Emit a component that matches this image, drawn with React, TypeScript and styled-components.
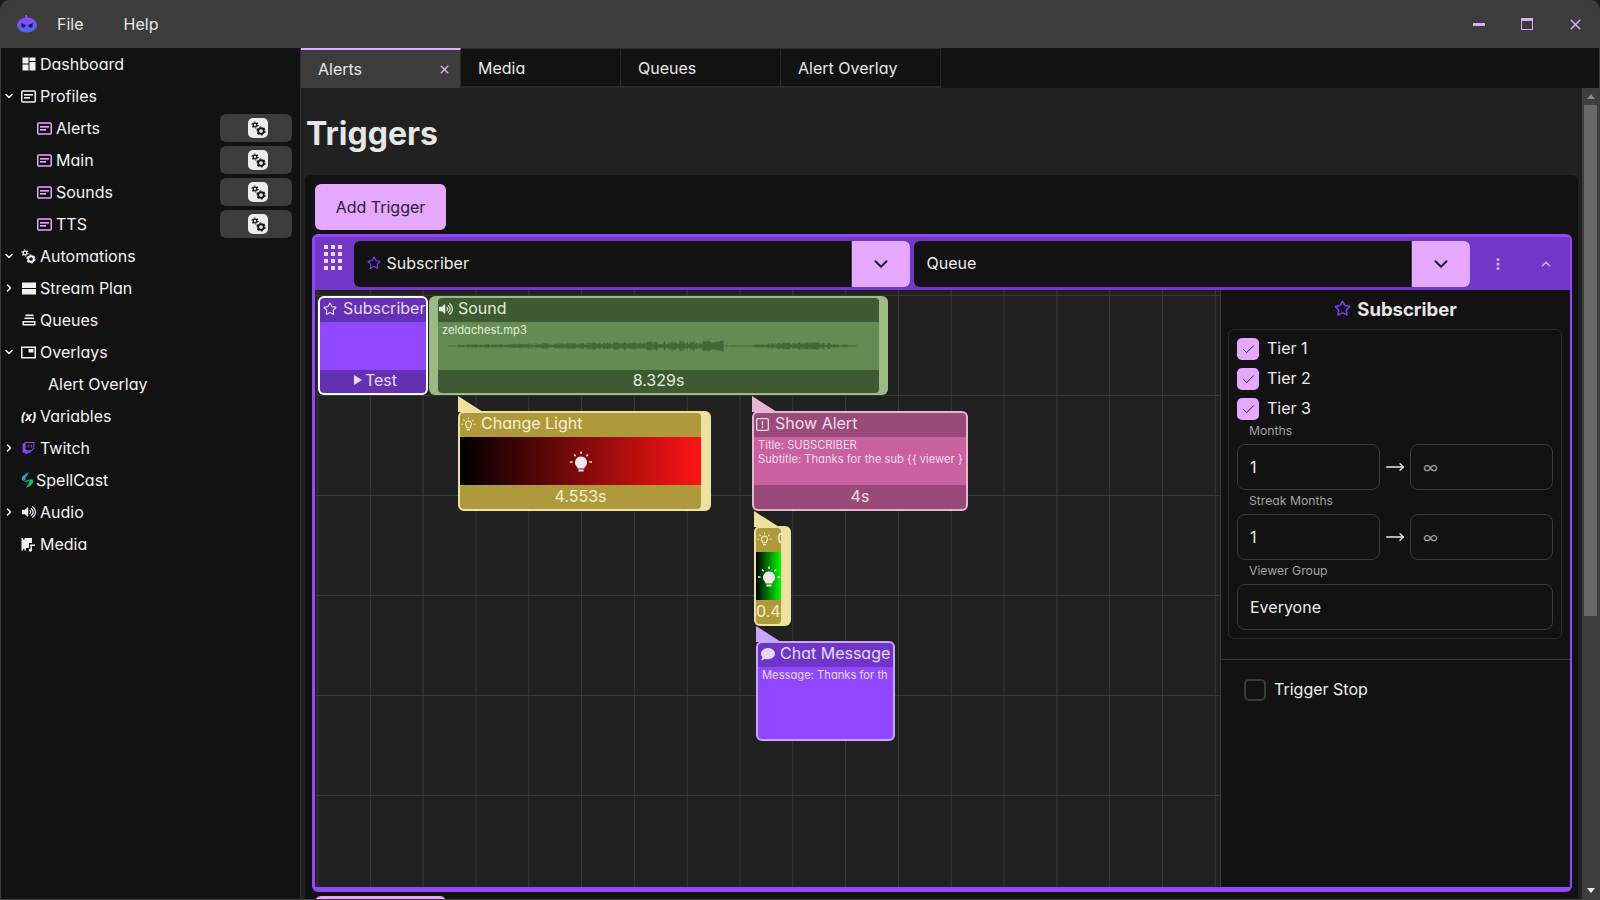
import { useMemo } from "react";
import styled, { createGlobalStyle } from "styled-components";
import { Check, ChevronDown, ChevronRight, ChevronUp, MoveRight, Star, X } from "lucide-react";
import { FaComment, FaTwitch, FaVolumeUp } from "react-icons/fa";

const GlobalStyle = createGlobalStyle`
  html, body {
    margin: 0;
    height: 100%;
    background: #1a1a1a;
    overflow: hidden;
  }
  * {
    box-sizing: border-box;
  }
  body {
    font-family: Inter, "Liberation Sans", sans-serif;
    font-feature-settings: "cv11";
    color: #efeff1;
  }
`;

/* --- icons --- */

function Logo() {
  return (
    <svg width="20" height="18" viewBox="0 0 20 18">
      <defs>
        <linearGradient id="logoFill" x1="0" y1="0" x2="0" y2="1">
          <stop offset="0" stopColor="#9147ff" />
          <stop offset="1" stopColor="#3f6ff0" />
        </linearGradient>
      </defs>
      <rect x="8.5" y="0" width="1.5" height="5" fill="#a463ff" />
      <ellipse cx="10" cy="10" rx="10" ry="7.6" fill="url(#logoFill)" />
      <path d="M4 8 L9 10 L7 13 L4.5 12 Z M16 8 L11 10 L13 13 L15.5 12 Z" fill="#2a1b4d" />
    </svg>
  );
}

function DashboardIcon() {
  return (
    <svg width="14" height="14" viewBox="0 0 14 14" fill="currentColor">
      <rect x="0.5" y="0.5" width="6" height="6" />
      <rect x="0.5" y="7.5" width="6" height="6" />
      <rect x="7.5" y="0.5" width="6" height="3.5" />
      <rect x="7.5" y="5" width="6" height="8.5" />
    </svg>
  );
}

function ProfileIcon({ tone = "currentColor", bar = "currentColor" }: { tone?: string; bar?: string }) {
  return (
    <svg width="15" height="13" viewBox="0 0 15 13" fill="none">
      <rect x="0.75" y="1" width="13.5" height="11" rx="1" stroke={tone} strokeWidth="1.5" />
      <rect x="3" y="4" width="9" height="1.6" fill={bar} />
      <rect x="3" y="7" width="6" height="1.6" fill={bar} />
    </svg>
  );
}

function Gear({ cx, cy, r }: { cx: number; cy: number; r: number }) {
  const dash = (2 * Math.PI * (r + 0.6)) / 12;
  return (
    <g fill="none" stroke="currentColor">
      <circle cx={cx} cy={cy} r={r - 0.6} strokeWidth={r * 0.55} />
      <circle cx={cx} cy={cy} r={r + 0.6} strokeWidth="1.2" strokeDasharray={`${dash} ${dash}`} />
    </g>
  );
}

function GearsIcon() {
  return (
    <svg width="15" height="15" viewBox="0 0 15 15">
      <Gear cx={4} cy={4} r={2.4} />
      <Gear cx={10} cy={10} r={3.4} />
    </svg>
  );
}

function PlanIcon() {
  return (
    <svg width="14" height="13" viewBox="0 0 14 13" fill="currentColor">
      <rect x="0" y="0.5" width="14" height="5.5" />
      <rect x="0" y="7" width="14" height="5.5" />
    </svg>
  );
}

function QueueIcon() {
  return (
    <svg width="14" height="12" viewBox="0 0 14 12" fill="currentColor">
      <rect x="3.5" y="0.5" width="8" height="1.6" />
      <rect x="2.5" y="3.5" width="9.5" height="1.6" />
      <path d="M0.5 7 H13.5 V11.5 H0.5 Z M2 8.5 V10 H12 V8.5 Z" fillRule="evenodd" />
    </svg>
  );
}

function OverlayIcon() {
  return (
    <svg width="15" height="13" viewBox="0 0 15 13" fill="currentColor">
      <path d="M0 0.5 H15 V12.5 H0 Z M1.5 2 V11 H13.5 V2 Z" fillRule="evenodd" />
      <rect x="7.5" y="3" width="5" height="3.5" />
    </svg>
  );
}

function SpellCastIcon() {
  return (
    <svg width="13" height="16" viewBox="0 0 13 16">
      <path d="M8 0 L3 3 Q-1 6 2 9 L5 7 Q3.5 5.5 6 4 Z" fill="#19a7c9" />
      <path d="M5 16 L10 13 Q14 10 11 7 L8 9 Q9.5 10.5 7 12 Z" fill="#12c46b" />
      <path d="M2 9 L11 7 L8 9 L5 10 Z" fill="#159f9c" />
    </svg>
  );
}

function MediaIcon() {
  return (
    <svg width="15" height="15" viewBox="0 0 15 15" fill="currentColor">
      <path d="M0.5 1 H2 V2.5 H3.5 V1 H11 V6 H8 V11 H5 V13.5 H3.5 V12 H2 V13.5 H0.5 Z" />
      <path d="M9 7.5 H14 V9 H11 V13 A1.6 1.6 0 1 1 9.6 11.5 L9.6 9 H9 Z" />
    </svg>
  );
}

function BulbOutline() {
  return (
    <svg width="15" height="15" viewBox="0 0 15 15" fill="none" stroke="currentColor" strokeWidth="1.1">
      <path d="M7.5 4 A3 3 0 0 1 9.5 9.2 L9.3 10.8 H5.7 L5.5 9.2 A3 3 0 0 1 7.5 4 Z" />
      <path d="M6 12.6 H9 M7.5 0.5 V2.2 M2.4 2.6 L3.6 3.8 M12.6 2.6 L11.4 3.8 M0.5 7.2 H2.2 M12.8 7.2 H14.5" />
    </svg>
  );
}

function BulbSolid() {
  return (
    <svg width="24" height="24" viewBox="0 0 24 24" fill="currentColor">
      <path d="M12 6.5 A6 6 0 0 1 15.6 17.3 V18.5 H8.4 V17.3 A6 6 0 0 1 12 6.5 Z" />
      <rect x="9.4" y="19.5" width="5.2" height="2" />
      <path d="M12 1.5 V4 M5 4.5 L6.6 6.2 M19 4.5 L17.4 6.2 M1 12 H3.6 M20.4 12 H23" stroke="currentColor" strokeWidth="1.6" />
    </svg>
  );
}

function AlertIcon() {
  return (
    <svg width="13" height="13" viewBox="0 0 13 13" fill="none" stroke="currentColor" strokeWidth="1.3">
      <rect x="0.7" y="0.7" width="11.6" height="11.6" rx="1" />
      <path d="M6.5 3 V7.4 M6.5 8.6 V10" />
    </svg>
  );
}

function GripIcon() {
  const dots = [];
  for (let row = 0; row < 4; row++) {
    for (let col = 0; col < 3; col++) {
      dots.push(<rect key={`${row}-${col}`} x={col * 7} y={row * 7} width="4" height="4" />);
    }
  }
  return (
    <svg width="18" height="25" viewBox="0 0 18 25" fill="#e9dcff">
      {dots}
    </svg>
  );
}

function KebabIcon() {
  return (
    <svg width="4" height="12" viewBox="0 0 4 12" fill="#e6a8ff">
      <circle cx="2" cy="1.6" r="1.5" />
      <circle cx="2" cy="6" r="1.5" />
      <circle cx="2" cy="10.4" r="1.5" />
    </svg>
  );
}

function Waveform() {
  const path = useMemo(() => {
    let seed = 7;
    const rand = () => {
      seed = (seed * 16807) % 2147483647;
      return seed / 2147483647;
    };
    let d = "";
    for (let x = 10; x < 420; x += 1) {
      let amp = 0.4;
      if (x > 20 && x < 286) amp = 0.8 + (x / 286) * 3.6;
      else if (x >= 286 && x < 315) amp = 0.4;
      else if (x >= 315 && x < 410) amp = 1 + 2.2 * Math.sin(((x - 315) / 95) * Math.PI);
      const h = amp * (0.4 + rand() * 0.9);
      d += `M${x} ${24 - h}V${24 + h}`;
    }
    return d;
  }, []);
  return (
    <WaveSvg width="440" height="48" viewBox="0 0 440 48">
      <path d={path} stroke="#38502c" strokeWidth="0.8" fill="none" />
    </WaveSvg>
  );
}

/* --- window frame --- */

const Frame = styled.div`
  width: 1600px;
  height: 900px;
  display: flex;
  flex-direction: column;
  overflow: hidden;
  border: 1px solid #3c3c3c;
  border-top: 0;
  border-radius: 9px 9px 0 0;
  background: #121212;
`;

const TitleBar = styled.header`
  height: 48px;
  flex: none;
  display: flex;
  align-items: center;
  padding-left: 16px;
  background: #3c3c3c;
  font-size: 16px;
  color: #e8e8e8;
`;

const MenuItem = styled.span`
  margin-left: ${(p: { $gap: number }) => p.$gap}px;
`;

const WindowButtons = styled.div`
  margin-left: auto;
  display: flex;
  align-items: center;
  color: #e6a8ff;
`;

const WindowButton = styled.span`
  width: 48px;
  height: 48px;
  display: flex;
  align-items: center;
  justify-content: center;
`;

const MinimizeGlyph = styled.span`
  width: 12px;
  height: 3px;
  background: #e6a8ff;
`;

const MaximizeGlyph = styled.span`
  width: 12px;
  height: 12px;
  border: 1.5px solid #e6a8ff;
  border-top-width: 3px;
`;

const Body = styled.div`
  flex: 1;
  min-height: 0;
  display: flex;
`;

/* --- sidebar --- */

const Sidebar = styled.nav`
  width: 300px;
  flex: none;
  background: #121212;
  border-right: 1px solid #303030;
  font-size: 16px;
`;

const NavRow = styled.div<{ $indent: number; $gap?: number }>`
  height: 32px;
  display: flex;
  align-items: center;
  gap: ${(p) => p.$gap ?? 4}px;
  padding-left: ${(p) => p.$indent}px;
  padding-right: 8px;
  color: #f2f2f2;
`;

const Caret = styled.span`
  width: 12px;
  margin-left: -18px;
  margin-right: 2px;
  display: flex;
  color: #f2f2f2;
`;

const NavIcon = styled.span`
  width: 15px;
  flex: none;
  display: flex;
  align-items: center;
  justify-content: center;
`;

const VariableGlyph = styled.span`
  font-size: 12px;
  font-style: italic;
  font-weight: 700;
  white-space: nowrap;
`;

const GearPill = styled.span`
  margin-left: auto;
  width: 72px;
  height: 28px;
  display: flex;
  align-items: center;
  justify-content: center;
  padding-left: 4px;
  border-radius: 6px;
  background: #3c3c3c;
`;

const GearTile = styled.span`
  width: 20px;
  height: 20px;
  display: flex;
  align-items: center;
  justify-content: center;
  border-radius: 5px;
  background: #ececec;
  color: #16161a;
`;

/* --- main area --- */

const Main = styled.main`
  flex: 1;
  min-width: 0;
  display: flex;
  flex-direction: column;
`;

const TabStrip = styled.div`
  height: 40px;
  flex: none;
  display: flex;
  background: #121212;
`;

const Tab = styled.div<{ $active?: boolean }>`
  width: 160px;
  display: flex;
  align-items: center;
  justify-content: space-between;
  padding: ${(p) => (p.$active ? "0 9px 0 17px" : "0 17px")};
  font-size: 16px;
  color: #e8e8e8;
  background: ${(p) => (p.$active ? "#3c3c3c" : "#121212")};
  border-top: ${(p) => (p.$active ? "2px solid #e6a8ff" : "1px solid #2b2b2b")};
  border-bottom: ${(p) => (p.$active ? "0" : "2px solid #2b2b2b")};
  border-right: 1px solid #2b2b2b;
`;

const ScrollArea = styled.div`
  flex: 1;
  min-height: 0;
  display: flex;
`;

const Content = styled.section`
  flex: 1;
  min-width: 0;
  overflow: hidden;
  padding: 0 4px;
  background: #212121;
`;

const Heading = styled.h1`
  margin: 0;
  padding: 26px 0 21px 1px;
  font-size: 32px;
  line-height: 40px;
  font-weight: 700;
  color: #e6e6e6;
`;

const TriggerPanel = styled.div`
  padding: 9px 6px 0 7px;
  border-radius: 6px;
  background: #121212;
`;

const AddButton = styled.button`
  display: block;
  width: 131px;
  height: 46px;
  margin: 0 0 4px 3px;
  border: 0;
  border-radius: 6px;
  background: #e6a8ff;
  font: inherit;
  font-size: 16px;
  color: #2a2030;
`;

const TriggerCard = styled.div`
  height: 658px;
  margin-bottom: 4px;
  display: flex;
  flex-direction: column;
  border-style: solid;
  border-width: 3px 2px 5px 3px;
  border-color: #9147ff;
  border-radius: 6px;
  background: #121212;
`;

const CardHeader = styled.div`
  height: 53px;
  flex: none;
  display: flex;
  align-items: center;
  background: #7337c8;
`;

const GripCell = styled.div`
  width: 38.5px;
  flex: none;
  display: flex;
  justify-content: center;
  padding: 0 2px 12px 0;
`;

const Selector = styled.div`
  width: 556px;
  height: 46px;
  flex: none;
  display: flex;
  overflow: hidden;
  border-radius: 6px;
  background: #121212;
  font-size: 16px;

  & + & {
    margin-left: 4px;
  }
`;

const SelectorValue = styled.div`
  flex: 1;
  display: flex;
  align-items: center;
  gap: 6px;
  padding: 0 0 2px 13px;
  color: #ececec;
  border-right: 1px solid #3a3a3a;
`;

const SelectorToggle = styled.div`
  width: 58px;
  display: flex;
  align-items: center;
  justify-content: center;
  background: #e6a8ff;
  color: #1a1420;
`;

const HeaderActions = styled.div`
  display: flex;
  padding-left: 4.5px;
`;

const IconCell = styled.span`
  width: 48px;
  display: flex;
  align-items: center;
  justify-content: center;
  color: #e6a8ff;
`;

const CardBody = styled.div`
  flex: 1;
  min-height: 0;
  display: flex;
`;

/* --- timeline --- */

const Timeline = styled.div`
  position: relative;
  flex: 1;
  min-width: 0;
  overflow: hidden;
  background-color: #212121;
  background-image:
    linear-gradient(to right, #383838 1px, transparent 1px),
    linear-gradient(to bottom, #383838 1px, transparent 1px);
  background-size: 52.82px 100%, 100% 100px;
  background-position: 2px 0, 0 5px;
`;

type Tone = { edge: string; head: string; fill: string; ink: string };

const purple: Tone = { edge: "#c9a5ff", head: "#6f35c8", fill: "#9147ff", ink: "#e6dbff" };
const green: Tone = { edge: "#9abb83", head: "#3f5a33", fill: "#648c52", ink: "#e0eed8" };
const yellow: Tone = { edge: "#efe0a0", head: "#ae9a3b", fill: "#ae9a3b", ink: "#f6f0d2" };
const pink: Tone = { edge: "#e8b4d4", head: "#9a4a78", fill: "#c9609f", ink: "#f5dcea" };

const Node = styled.div<{
  $x: number;
  $y: number;
  $w: number;
  $h: number;
  $tone: Tone;
  $edge?: string;
  $left?: number;
  $right?: number;
  $notch?: boolean;
}>`
  position: absolute;
  left: ${(p) => p.$x - 315}px;
  top: ${(p) => p.$y - 290}px;
  width: ${(p) => p.$w}px;
  height: ${(p) => p.$h}px;
  padding: 2px ${(p) => p.$right ?? 2}px 2px ${(p) => p.$left ?? 2}px;
  border-radius: 6px;
  background: ${(p) => p.$edge ?? p.$tone.edge};
  color: ${(p) => p.$tone.ink};

  &::before {
    content: ${(p) => (p.$notch ? '""' : "none")};
    position: absolute;
    left: 0;
    top: -15px;
    width: 25px;
    height: 16px;
    background: ${(p) => p.$tone.edge};
    clip-path: polygon(0 0, 100% 100%, 0 100%);
  }
`;

const NodeInner = styled.div`
  height: 100%;
  display: flex;
  flex-direction: column;
  overflow: hidden;
  border-radius: 4px;
`;

const NodeHead = styled.div<{ $bg: string; $pad?: number; $gap?: number }>`
  height: 24px;
  flex: none;
  display: flex;
  align-items: center;
  gap: ${(p) => p.$gap ?? 5}px;
  padding: 0 0 5px ${(p) => p.$pad ?? 3}px;
  background: ${(p) => p.$bg};
  font-size: 16px;
  white-space: nowrap;

  svg {
    flex: none;
    margin-top: 3px;
  }
`;

const NodeFill = styled.div<{ $bg: string; $grow?: boolean }>`
  position: relative;
  height: 48px;
  flex: ${(p) => (p.$grow ? 1 : "none")};
  background: ${(p) => p.$bg};
`;

const NodeText = styled.div<{ $end?: number }>`
  position: relative;
  margin: 0 ${(p) => p.$end ?? 3}px 0 4px;
  padding-top: 1px;
  overflow: hidden;
  font-size: 11.2px;
  line-height: 14px;
  white-space: nowrap;
`;

const WaveSvg = styled.svg`
  position: absolute;
  left: 0;
  top: 0;
`;

const LightFill = styled.div<{ $color: string }>`
  height: 48px;
  flex: none;
  display: flex;
  align-items: center;
  justify-content: center;
  padding-top: 1px;
  background: linear-gradient(to right, #000, ${(p) => p.$color});
  color: #f0e8ec;
`;

const NodeFoot = styled.div<{ $bg: string; $shift?: number }>`
  flex: 1;
  display: flex;
  align-items: center;
  justify-content: safe center;
  gap: 3px;
  padding: 0 0 3px ${(p) => p.$shift ?? 0}px;
  background: ${(p) => p.$bg};
  font-size: 16px;
  white-space: nowrap;
  overflow: hidden;
`;

const PlayGlyph = styled.span`
  width: 0;
  height: 0;
  border-left: 8px solid currentColor;
  border-top: 5px solid transparent;
  border-bottom: 5px solid transparent;
`;

/* --- trigger settings --- */

const SettingsPanel = styled.aside`
  width: 350px;
  flex: none;
  border-left: 1px solid #383838;
  background: #121212;
`;

const SettingsTitle = styled.h2`
  height: 39px;
  margin: 0;
  display: flex;
  align-items: center;
  justify-content: center;
  gap: 6px;
  padding-bottom: 2px;
  font-size: 18.5px;
  font-weight: 700;
  color: #e6e6e6;
`;

const GroupBox = styled.div`
  margin: 0 8px 0 7px;
  padding: 8px;
  border: 1px solid #2c2c2c;
  border-radius: 6px;
`;

const CheckRow = styled.label`
  height: 22px;
  margin-bottom: 8px;
  display: flex;
  align-items: center;
  gap: 8px;
  font-size: 16px;
  color: #ececec;
`;

const CheckText = styled.span`
  margin-bottom: 2px;
`;

const Tick = styled.span<{ $on?: boolean }>`
  width: 22px;
  height: 22px;
  display: flex;
  align-items: center;
  justify-content: center;
  border-radius: 5px;
  border: ${(p) => (p.$on ? "0" : "2px solid #3a3a3a")};
  background: ${(p) => (p.$on ? "#e6a8ff" : "transparent")};
  color: #1c1524;
`;

const FieldLabel = styled.div`
  height: 24px;
  padding: 0 0 4px 12px;
  display: flex;
  align-items: center;
  font-size: 12.2px;
  color: #a3a3a3;
`;

const TightLabel = styled(FieldLabel)`
  margin-top: -8px;
`;

const RangeRow = styled.div`
  display: flex;
  align-items: center;
  justify-content: space-between;
  color: #e8e8e8;
`;

const Field = styled.div<{ $wide?: boolean; $muted?: boolean }>`
  width: ${(p) => (p.$wide ? "100%" : "143px")};
  height: 46px;
  display: flex;
  align-items: center;
  padding-left: 12px;
  border: 1px solid #3a3a3a;
  border-radius: 8px;
  font-size: 16px;
  color: ${(p) => (p.$muted ? "#9a9a9a" : "#ececec")};
`;

const Separator = styled.div`
  margin-top: 20px;
  padding: 19px 0 0 23px;
  border-top: 1px solid #383838;
`;

/* --- scrollbar --- */

const ScrollBar = styled.div`
  width: 17px;
  flex: none;
  display: flex;
  flex-direction: column;
  background: #3e3e3e;
`;

const ScrollArrow = styled.span<{ $down?: boolean }>`
  height: 17px;
  flex: none;
  display: flex;
  align-items: center;
  justify-content: center;

  &::after {
    content: "";
    border-left: 4px solid transparent;
    border-right: 4px solid transparent;
    ${(p) => (p.$down ? "border-top: 5px solid #f0f0f0;" : "border-bottom: 5px solid #8a8a8a;")}
  }
`;

const ScrollThumb = styled.div`
  height: 511px;
  margin: 0 2px;
  background: #686868;
`;

const ScrollGap = styled.div`
  flex: 1;
`;

/* --- data --- */

const profileRows = ["Alerts", "Main", "Sounds", "TTS"];
const tabs = ["Media", "Queues", "Alert Overlay"];
const tiers = ["Tier 1", "Tier 2", "Tier 3"];

function OpenCaret() {
  return (
    <Caret>
      <ChevronDown size={12} strokeWidth={3} />
    </Caret>
  );
}

function ClosedCaret() {
  return (
    <Caret>
      <ChevronRight size={12} strokeWidth={3} />
    </Caret>
  );
}

function App() {
  return (
    <>
      <GlobalStyle />
      <Frame>
        <TitleBar>
          <Logo />
          <MenuItem $gap={20}>File</MenuItem>
          <MenuItem $gap={40}>Help</MenuItem>
          <WindowButtons>
            <WindowButton>
              <MinimizeGlyph />
            </WindowButton>
            <WindowButton>
              <MaximizeGlyph />
            </WindowButton>
            <WindowButton>
              <X size={17} strokeWidth={2} />
            </WindowButton>
          </WindowButtons>
        </TitleBar>

        <Body>
          <Sidebar>
            <NavRow $indent={20}>
              <NavIcon><DashboardIcon /></NavIcon>
              Dashboard
            </NavRow>
            <NavRow $indent={20}>
              <OpenCaret />
              <NavIcon><ProfileIcon /></NavIcon>
              Profiles
            </NavRow>
            {profileRows.map((name) => (
              <NavRow $indent={36} key={name}>
                <NavIcon><ProfileIcon tone="#e6a8ff" bar="#e6a8ff" /></NavIcon>
                {name}
                <GearPill>
                  <GearTile><GearsIcon /></GearTile>
                </GearPill>
              </NavRow>
            ))}
            <NavRow $indent={20}>
              <OpenCaret />
              <NavIcon><GearsIcon /></NavIcon>
              Automations
            </NavRow>
            <NavRow $indent={20}>
              <ClosedCaret />
              <NavIcon><PlanIcon /></NavIcon>
              Stream Plan
            </NavRow>
            <NavRow $indent={20}>
              <NavIcon><QueueIcon /></NavIcon>
              Queues
            </NavRow>
            <NavRow $indent={20}>
              <OpenCaret />
              <NavIcon><OverlayIcon /></NavIcon>
              Overlays
            </NavRow>
            <NavRow $indent={47}>Alert Overlay</NavRow>
            <NavRow $indent={20}>
              <NavIcon><VariableGlyph>(x)</VariableGlyph></NavIcon>
              Variables
            </NavRow>
            <NavRow $indent={20}>
              <ClosedCaret />
              <NavIcon><FaTwitch size={13} color="#8a46f5" /></NavIcon>
              Twitch
            </NavRow>
            <NavRow $indent={19} $gap={1}>
              <NavIcon><SpellCastIcon /></NavIcon>
              SpellCast
            </NavRow>
            <NavRow $indent={20}>
              <ClosedCaret />
              <NavIcon><FaVolumeUp size={14} /></NavIcon>
              Audio
            </NavRow>
            <NavRow $indent={20}>
              <NavIcon><MediaIcon /></NavIcon>
              Media
            </NavRow>
          </Sidebar>

          <Main>
            <TabStrip>
              <Tab $active>
                Alerts
                <X size={13} strokeWidth={2.5} color="#e6a8ff" />
              </Tab>
              {tabs.map((name) => (
                <Tab key={name}>{name}</Tab>
              ))}
            </TabStrip>

            <ScrollArea>
              <Content>
                <Heading>Triggers</Heading>
                <TriggerPanel>
                  <AddButton>Add Trigger</AddButton>
                  <TriggerCard>
                    <CardHeader>
                      <GripCell><GripIcon /></GripCell>
                      <Selector>
                        <SelectorValue>
                          <Star size={14} color="#7a3cff" strokeWidth={2} />
                          Subscriber
                        </SelectorValue>
                        <SelectorToggle><ChevronDown size={22} strokeWidth={2} /></SelectorToggle>
                      </Selector>
                      <Selector>
                        <SelectorValue>Queue</SelectorValue>
                        <SelectorToggle><ChevronDown size={22} strokeWidth={2} /></SelectorToggle>
                      </Selector>
                      <HeaderActions>
                        <IconCell><KebabIcon /></IconCell>
                        <IconCell><ChevronUp size={14} strokeWidth={2.5} /></IconCell>
                      </HeaderActions>
                    </CardHeader>

                    <CardBody>
                      <Timeline>
                        <Node $x={318} $y={296} $w={110} $h={99} $tone={purple} $edge="#ffffff">
                          <NodeInner>
                            <NodeHead $bg="#6430b5" $gap={6}>
                              <Star size={14} strokeWidth={2} />
                              Subscriber
                            </NodeHead>
                            <NodeFill $bg={purple.fill} />
                            <NodeFoot $bg="#6430b5" $shift={5}><PlayGlyph />Test</NodeFoot>
                          </NodeInner>
                        </Node>

                        <Node $x={429} $y={296} $w={459} $h={99} $tone={green} $left={9} $right={9}>
                          <NodeInner>
                            <NodeHead $bg={green.head} $pad={1}>
                              <FaVolumeUp size={14} />
                              Sound
                            </NodeHead>
                            <NodeFill $bg={green.fill}>
                              <Waveform />
                              <NodeText>zeldachest.mp3</NodeText>
                            </NodeFill>
                            <NodeFoot $bg={green.head}>8.329s</NodeFoot>
                          </NodeInner>
                        </Node>

                        <Node $x={458} $y={411} $w={253} $h={100} $tone={yellow} $right={10} $notch>
                          <NodeInner>
                            <NodeHead $bg={yellow.head} $pad={1}>
                              <BulbOutline />
                              Change Light
                            </NodeHead>
                            <LightFill $color="#ff1414"><BulbSolid /></LightFill>
                            <NodeFoot $bg={yellow.head}>4.553s</NodeFoot>
                          </NodeInner>
                        </Node>

                        <Node $x={752} $y={411} $w={216} $h={100} $tone={pink} $notch>
                          <NodeInner>
                            <NodeHead $bg={pink.head} $pad={2} $gap={6}>
                              <AlertIcon />
                              Show Alert
                            </NodeHead>
                            <NodeFill $bg={pink.fill}>
                              <NodeText>
                                Title: SUBSCRIBER
                                <br />
                                Subtitle: Thanks for the sub {"{{"} viewer {"}}"}
                              </NodeText>
                            </NodeFill>
                            <NodeFoot $bg={pink.head}>4s</NodeFoot>
                          </NodeInner>
                        </Node>

                        <Node $x={754} $y={526} $w={37} $h={100} $tone={yellow} $right={10} $notch>
                          <NodeInner>
                            <NodeHead $bg={yellow.head} $pad={1}>
                              <BulbOutline />
                              Change Light
                            </NodeHead>
                            <LightFill $color="#00ff00"><BulbSolid /></LightFill>
                            <NodeFoot $bg={yellow.head}>0.45s</NodeFoot>
                          </NodeInner>
                        </Node>

                        <Node $x={756} $y={641} $w={139} $h={100} $tone={purple} $notch>
                          <NodeInner>
                            <NodeHead $bg={purple.head}>
                              <FaComment size={14} />
                              Chat Message
                            </NodeHead>
                            <NodeFill $bg={purple.fill} $grow>
                              <NodeText $end={5}>Message: Thanks for the sub</NodeText>
                            </NodeFill>
                          </NodeInner>
                        </Node>
                      </Timeline>

                      <SettingsPanel>
                        <SettingsTitle>
                          <Star size={17} color="#7a3cff" strokeWidth={2.2} />
                          Subscriber
                        </SettingsTitle>
                        <GroupBox>
                          {tiers.map((tier) => (
                            <CheckRow key={tier}>
                              <Tick $on><Check size={15} strokeWidth={1.5} /></Tick>
                              <CheckText>{tier}</CheckText>
                            </CheckRow>
                          ))}
                          <TightLabel>Months</TightLabel>
                          <RangeRow>
                            <Field>1</Field>
                            <MoveRight size={20} strokeWidth={1.6} />
                            <Field $muted>∞</Field>
                          </RangeRow>
                          <FieldLabel>Streak Months</FieldLabel>
                          <RangeRow>
                            <Field>1</Field>
                            <MoveRight size={20} strokeWidth={1.6} />
                            <Field $muted>∞</Field>
                          </RangeRow>
                          <FieldLabel>Viewer Group</FieldLabel>
                          <Field $wide>Everyone</Field>
                        </GroupBox>
                        <Separator>
                          <CheckRow>
                            <Tick />
                            <CheckText>Trigger Stop</CheckText>
                          </CheckRow>
                        </Separator>
                      </SettingsPanel>
                    </CardBody>
                  </TriggerCard>
                  <AddButton>Add Trigger</AddButton>
                </TriggerPanel>
              </Content>
              <ScrollBar>
                <ScrollArrow />
                <ScrollThumb />
                <ScrollGap />
                <ScrollArrow $down />
              </ScrollBar>
            </ScrollArea>
          </Main>
        </Body>
      </Frame>
    </>
  );
}

export default App;
